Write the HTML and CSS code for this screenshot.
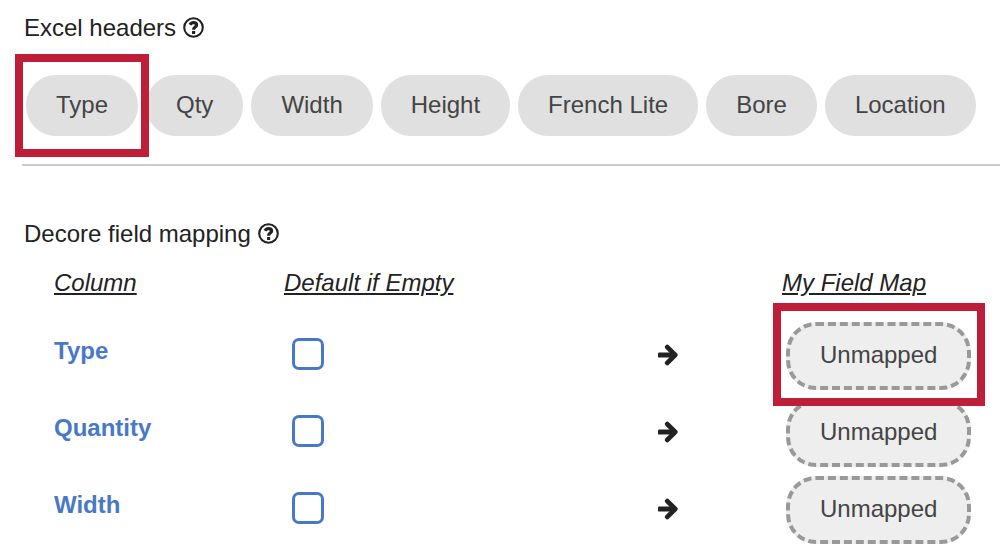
FILE: index.html
```html
<!DOCTYPE html>
<html lang="en">
<head>
    <meta charset="UTF-8">
    <meta name="viewport" content="width=device-width, initial-scale=1.0">
    <title>Field mapping</title>
    <link rel="stylesheet" href="styles.css">
</head>
<body>
    <!-- shared icons -->
    <svg class="sprite" aria-hidden="true">
        <symbol id="help" viewBox="0 0 21 21">
            <circle cx="10.5" cy="10.5" r="9.3" fill="none" stroke="currentColor" stroke-width="2.1"/>
            <path d="M7 7.8C7.9 6.2 9 5.6 10.5 5.6C12.2 5.6 13.6 6.5 13.6 8C13.6 10.2 10.6 10 10.6 12.8" fill="none" stroke="currentColor" stroke-width="3.2"/>
            <rect x="9" y="13.9" width="3.2" height="3.1" rx="0.4" fill="currentColor"/>
        </symbol>
        <symbol id="arrow" viewBox="0 0 20 22">
            <path d="M0 9.6Q0 8.4 1.2 8.4H15V13.6H1.2Q0 13.6 0 12.4Z" fill="currentColor"/>
            <path d="M9.3 3.1L17.2 11L9.3 18.9" fill="none" stroke="currentColor" stroke-width="4.8" stroke-linejoin="round" stroke-linecap="round"/>
        </symbol>
    </svg>

    <section class="headers">
        <h2>Excel headers
            <button class="help" aria-label="Help"><svg><use href="#help"/></svg></button>
        </h2>
        <ul class="pills">
            <li class="marked"><button class="pill">Type</button></li>
            <li><button class="pill">Qty</button></li>
            <li><button class="pill">Width</button></li>
            <li><button class="pill">Height</button></li>
            <li><button class="pill">French Lite</button></li>
            <li><button class="pill">Bore</button></li>
            <li><button class="pill">Location</button></li>
        </ul>
    </section>

    <section class="mapping">
        <h2>Decore field mapping
            <button class="help" aria-label="Help"><svg><use href="#help"/></svg></button>
        </h2>
        <table>
            <thead>
                <tr>
                    <th class="name">Column</th>
                    <th class="default">Default if Empty</th>
                    <th class="to"></th>
                    <th>My Field Map</th>
                </tr>
            </thead>
            <tbody>
                <tr>
                    <td class="name"><label for="type">Type</label></td>
                    <td class="default"><input type="checkbox" id="type"></td>
                    <td class="to"><svg class="arrow"><use href="#arrow"/></svg></td>
                    <td class="map"><div class="marked"><button class="pill unmapped">Unmapped</button></div></td>
                </tr>
                <tr>
                    <td class="name"><label for="quantity">Quantity</label></td>
                    <td class="default"><input type="checkbox" id="quantity"></td>
                    <td class="to"><svg class="arrow"><use href="#arrow"/></svg></td>
                    <td class="map"><button class="pill unmapped">Unmapped</button></td>
                </tr>
                <tr>
                    <td class="name"><label for="width">Width</label></td>
                    <td class="default"><input type="checkbox" id="width"></td>
                    <td class="to"><svg class="arrow"><use href="#arrow"/></svg></td>
                    <td class="map"><button class="pill unmapped">Unmapped</button></td>
                </tr>
            </tbody>
        </table>
    </section>
</body>
</html>
```
FILE: styles.css
```css
body{
    margin: 0;
    padding: 14px 0 0 22px;
    background-color: white;
    color: #222;
    font-family: "Liberation Sans", Arial, sans-serif;
    font-size: 24px;
    line-height: 28px;
}
.sprite{
    position: absolute;
    width: 0;
    height: 0;
}
h2{
    display: flex;
    align-items: center;
    gap: 7px;
    margin: 0;
    padding-left: 2px;
    font-size: 24px;
    font-weight: normal;
}
button{
    border: none;
    color: inherit;
    font: inherit;
    cursor: pointer;
}
.help{
    padding: 0 0 1px;
    background: none;
}
.help svg{
    display: block;
    width: 21px;
    height: 21px;
}

/* excel headers */
.headers{
    padding-bottom: 28px;
    border-bottom: 2px solid #ccc;
}
.pills{
    display: flex;
    gap: 8px;
    margin: 33px 0 0;
    padding: 0 0 0 4px;
    list-style: none;
}
.pill{
    display: block;
    padding: 15px 30px 17px;
    border-radius: 30px;
    background-color: #e0e0e0;
    color: #444;
    line-height: 29px;
    white-space: nowrap;
}

/* red frame round the pill to drag and its target */
.marked{
    position: relative;
    width: fit-content;
}
.marked::after{
    content: "";
    position: absolute;
    z-index: 1;
    inset: -21px -11px;
    border: 8px solid #be1e37;
    pointer-events: none;
}
.map .marked::after{
    inset: -19px -14px -16px -13px;
}

/* field mapping */
.mapping{
    padding-top: 54px;
}
table{
    width: 100%;
    margin-top: 21px;
    padding-left: 32px;
    border-spacing: 0;
    table-layout: fixed;
}
th{
    padding: 0 0 20px;
    font-style: italic;
    font-weight: normal;
    text-align: left;
    text-decoration: underline;
}
td{
    height: 77px;
    padding: 0;
}
.name{
    width: 230px;
}
.default{
    width: 374px;
}
.to{
    width: 124px;
}
td.name{
    padding-bottom: 9px;
    height: 68px;
    color: #4878c8;
    font-weight: bold;
}
td.default{
    padding-bottom: 3px;
    height: 74px;
}
td.to{
    padding-bottom: 2px;
    height: 75px;
}
td.map{
    padding-left: 4px;
}
input{
    display: block;
    appearance: none;
    box-sizing: border-box;
    width: 32px;
    height: 32px;
    margin: 0 0 0 8px;
    border: 3px solid #4878c8;
    border-radius: 7px;
}
input:checked{
    background-color: #4878c8;
}
.arrow{
    display: block;
    width: 20px;
    height: 22px;
}
.unmapped{
    border: 4px dashed #999;
    background-color: #eee;
    line-height: 28px;
}
```
